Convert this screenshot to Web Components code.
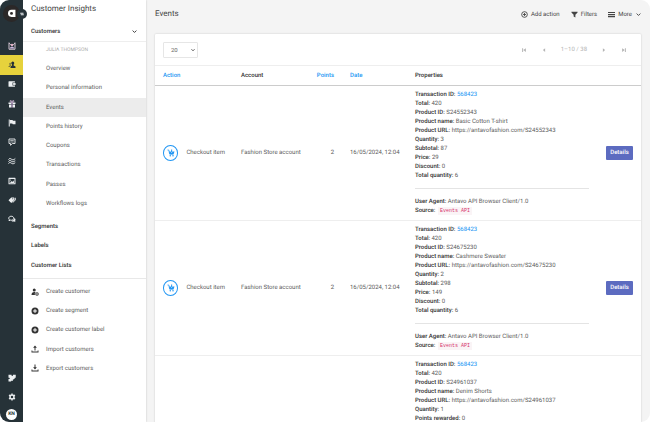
<!DOCTYPE html>
<html lang="en">
<head>
<meta charset="utf-8">
<title>Customer Insights – Events</title>
<style>
  html { background: #fff; }
  body { margin: 0; font: 6px/9px Roboto, "Liberation Sans", sans-serif; color: #5c5c5c; text-rendering: geometricPrecision; }
</style>
</head>
<body>
<app-shell>
  <nav-rail slot="rail"></nav-rail>
  <side-menu slot="menu"></side-menu>
  <page-header>
    <span slot="title">Events</span>
    <action-button icon="plusring">Add action</action-button>
    <action-button icon="filter">Filters</action-button>
    <action-button icon="menu" more>More</action-button>
  </page-header>
  <data-card>
    <list-toolbar></list-toolbar>
    <events-table></events-table>
  </data-card>
</app-shell>

<script>
const ICONS = {
  frame: '<path d="M2 1v13.500h12V1" fill="none" stroke="#e3d3e0" stroke-width="1.800"/><path d="M2 2l4 4M14 2l-4 4" stroke="#e3d3e0" stroke-width="1.500"/><circle cx="8" cy="6" r="2.600" fill="#e0b0c4"/><path d="M3.500 13c0-5 9-5 9 0z" fill="#c9b6e0"/>',
  customers: '<path d="M9.500 1a3 3 0 0 1 3 3c0 1.500-.6 2.500-1.200 3.200V9l3.700 2v3H5v-3l3-2V7.200C7.200 6.500 6.500 5.500 6.500 4a3 3 0 0 1 3-3z"/><path d="M4.500 3.500a2 2 0 0 0-2 2c0 1.200.5 1.900 1 2.300v1.400L1 10.500V12h3v-1.500L6.500 9 5.400 7.500 5.800 4z" opacity=".6"/>',
  wallet: '<path fill-rule="evenodd" d="M2 2.500h11a1 1 0 0 1 1 1V5H9v6h5v1.500a1 1 0 0 1-1 1H2a1 1 0 0 1-1-1v-9a1 1 0 0 1 1-1z"/><path d="M10 6h5v4h-5z"/><circle cx="11.800" cy="8" r=".9" fill="#263238"/>',
  gift: '<path d="M1 5h6v3H1zM9 5h6v3H9zM2 9h5v6H2zM9 9h5v6H9z"/><path d="M8 4.500C4 5 3 1 5.500 1 7 1 8 3 8 4.500zm0 0C12 5 13 1 10.500 1 9 1 8 3 8 4.500z" fill="none" stroke="#e8c8ee" stroke-width="1.500"/><path d="M7.300 5h1.400v10H7.300z" fill="#c08ad0"/>',
  flag: '<path d="M1.500 1h2v14h-2z"/><path d="M4 2h5l1 1.500h5v7H9.500L8.500 9H4z"/>',
  comment: '<path d="M2 2h12v9H9l-4 3.500V11H2z" fill="none" stroke="currentColor" stroke-width="1.800"/><path d="M4.500 5h7M4.500 8h7" stroke="currentColor" stroke-width="1.300"/>',
  waves: '<path d="M1 5c2-3 4-2 6-.5S12 6 14.500 3M1 9c2-3 4-2 6-.5s5 1.500 7.500-1.500M1 13c2-3 4-2 6-.5s5 1.500 7.500-1.500" fill="none" stroke="currentColor" stroke-width="2"/>',
  image: '<path fill-rule="evenodd" d="M2 1.500h12a1 1 0 0 1 1 1v11a1 1 0 0 1-1 1H2a1 1 0 0 1-1-1v-11a1 1 0 0 1 1-1zM3 4v8.500h10V4z"/><path d="M4 12l2.500-4 2 2L11 7l1.500 5z"/><circle cx="5" cy="6" r="1"/>',
  tags: '<path fill-rule="evenodd" d="M1 8.500L6.500 3H12v5.500L6.500 14zM9.500 4.500a1.100 1.100 0 1 0 .1 2.200 1.100 1.100 0 0 0-.1-2.200z"/><path d="M13 3.500h2.500V8L10 13.500l-1.200-1L13 8.500z"/>',
  chats: '<path d="M6.500 2.500c3 0 5 1.700 5 4s-2 4-5 4c-.7 0-1.400-.1-2-.3L2 11.500l.7-2.200C1.900 8.600 1.500 7.600 1.500 6.500c0-2.300 2-4 5-4z" fill="none" stroke="currentColor" stroke-width="2"/><path d="M12.800 6c1.500.8 2.200 1.900 2.200 3.300 0 .9-.3 1.700-.9 2.300l.7 2.400-2.500-1c-2.600.6-4.600-.1-5.600-1.600 3.500.2 6.100-2 6.100-5.400z"/>',
  puzzle: '<path d="M1 1.500h6v1a1.500 1.500 0 0 0 3 0v-1h5.500v6H14a1.300 1.300 0 0 0 0 2.500h-3v1.500H9.500V14H7.500v-1.500L6 15H1v-5h1.400a1.300 1.300 0 0 0 0-2.600H1z"/>',
  gear: '<circle cx="8" cy="8" r="4" fill="none" stroke="currentColor" stroke-width="3"/><path d="M6.600 1h2.800v2.500H6.600zM6.600 12.500h2.800V15H6.600zM1.300 5.200l1.400-2.400 2.200 1.300-1.400 2.400zM11.100 11.900l1.400-2.400 2.200 1.300-1.400 2.400zM1.300 10.800l1.400 2.400 2.200-1.300-1.400-2.400zM11.100 4.100l1.400 2.400 2.200-1.300-1.400-2.400z"/>',
  customeradd: '<circle cx="6.500" cy="4" r="3"/><path d="M1 14c0-4 2-6 5.500-6 1.200 0 2 .2 2.700.6A4.300 4.300 0 0 0 8 14z"/><circle cx="12" cy="12" r="3.500"/><path d="M12 10v4M10 12h4" stroke="#fff" stroke-width="1"/>',
  plusdisc: '<circle cx="8" cy="8" r="7"/><path d="M8 4.200v7.600M4.200 8h7.600" stroke="#fff" stroke-width="2"/>',
  plusring: '<circle cx="8" cy="8" r="6.500" fill="none" stroke="currentColor" stroke-width="2"/><path d="M8 4.500v7M4.500 8h7" stroke="currentColor" stroke-width="2"/>',
  upload: '<path d="M8 1l3.800 4.500H9V11H7V5.500H4.200zM1 11h1.800v2.200h10.400V11H15v4H1z"/>',
  download: '<path d="M8 11l3.800-4.500H9V1H7v5.500H4.200zM1 11h1.800v2.200h10.400V11H15v4H1z"/>',
  filter: '<path d="M1 1.500h14v1.800L10 8.500V15l-4-2.500v-4L1 3.300z"/>',
  menu: '<path d="M0 2h16v2.800H0zM0 6.800h16v2.800H0zM0 11.600h16v2.800H0z"/>',
  chevron: '<path d="M2 5l6 6 6-6" fill="none" stroke="currentColor" stroke-width="3"/>',
  first: '<path d="M3 3h2.600v10H3zM13 3v10L6 8z"/>',
  prev: '<path d="M11 3v10L5 8z"/>',
  next: '<path d="M5 3v10l6-5z"/>',
  last: '<path d="M10.400 3H13v10h-2.600zM3 3v10l7-5z"/>',
  swap: '<path d="M1 3h13v3.500H1zM3 9h12v3.500H3z"/>',
  cart: '<path d="M1 2h2.500l2 8.500H13" fill="none" stroke="currentColor" stroke-width="1.600"/><path d="M4 5h2.500l2.700 2.500L12 5h3l-1.700 5H5.200z"/><path d="M8.300 1h2v3h1.500L9.300 6.300 6.800 4h1.500z"/><circle cx="6.500" cy="13.500" r="1.500"/><circle cx="12" cy="13.500" r="1.500"/>',
  logo: '<path fill-rule="evenodd" d="M8 1.500h7V14H8A6.250 6.250 0 0 1 8 1.500zm0 3.700a2.600 2.600 0 1 0 .01 5.200A2.600 2.600 0 0 0 8 5.200z"/>'
};

function define(name, render) {
  customElements.define(name, class extends HTMLElement {
    connectedCallback() {
      if (this.shadowRoot) return;
      const t = document.createElement('template');
      t.innerHTML = render(this);
      this.attachShadow({ mode: 'open' }).append(t.content.cloneNode(true));
    }
  });
}

const RESET = `*{box-sizing:border-box} a{color:inherit;text-decoration:none} button{font:inherit;color:inherit;background:none;border:0;padding:0;margin:0;cursor:pointer;text-rendering:inherit}`;

define('ui-icon', el => `<style>
  :host{display:block;flex:none;width:var(--icon-size,8px);height:var(--icon-size,8px)}
  svg{display:block;width:100%;height:100%}
</style><svg viewBox="0 0 16 16" fill="currentColor" aria-hidden="true">${ICONS[el.getAttribute('name')]}</svg>`);

define('app-shell', () => `<style>${RESET}
  :host{display:grid;grid-template-columns:23px 123px minmax(0,1fr);height:100vh;overflow:hidden;border-radius:9px;background:#f4f4f4}
  main{padding:0 9px;overflow:hidden}
</style><slot name="rail"></slot><slot name="menu"></slot><main><slot></slot></main>`);

const railItems = [['frame','Dashboard'],['customers','Customers'],['wallet','Wallet'],['gift','Rewards'],['flag','Challenges'],['comment','Messages'],['waves','Workflows'],['image','Media'],['tags','Offers'],['chats','Feedback']];
define('nav-rail', () => `<style>${RESET}
  :host{display:flex;flex-direction:column;background:#263238;color:#eceff1;position:relative;z-index:1}
  .brand{height:36px;padding:5px 3px;--icon-size:9px}
  .logo{display:grid;place-items:center;width:17px;height:17px;border-radius:50%;background:#2b2828;color:#fff}
  .toggle{position:absolute;left:17px;top:9px;width:10px;height:10px;border-radius:50%;background:#263238;display:grid;place-items:center;--icon-size:4px}
  nav{display:grid;grid-auto-rows:1fr;height:193px}
  nav a,.foot>*{display:grid;place-items:center}
  nav a.on{background:#e6d23c;color:#263238}
  .foot{margin-top:auto;display:grid;grid-template-rows:19px 19px 16px}
  .avatar{width:11px;height:11px;border-radius:50%;background:#fff;color:#263238;font-size:5px;font-weight:700;line-height:11px;justify-self:center;align-self:center}
</style>
<div class="brand"><a class="logo" href="#" aria-label="Home"><ui-icon name="logo"></ui-icon></a>
<button class="toggle" aria-label="Toggle menu"><ui-icon name="swap"></ui-icon></button></div>
<nav>${railItems.map(([i,l]) => `<a href="#" aria-label="${l}"${i==='customers'?' class="on"':''}><ui-icon name="${i}"></ui-icon></a>`).join('')}</nav>
<div class="foot"><a href="#" aria-label="Modules"><ui-icon name="puzzle"></ui-icon></a><a href="#" aria-label="Settings"><ui-icon name="gear"></ui-icon></a><button class="avatar">KN</button></div>`);

const pages = ['Overview','Personal information','Events','Points history','Coupons','Transactions','Passes','Workflows logs'];
const actions = [['customeradd','Create customer'],['plusdisc','Create segment'],['plusdisc','Create customer label'],['upload','Import customers'],['download','Export customers']];
define('side-menu', () => `<style>${RESET}
  :host{display:block;background:#fff;box-shadow:0 0 2px #0003}
  h1{margin:0;padding:3px 8px;height:22px;font-size:8px;line-height:12px;font-weight:400;color:#444}
  .head{display:flex;align-items:center;justify-content:space-between;width:100%;height:20px;padding:0 9px 0 8px;border-bottom:1px solid #eee;font-weight:500;color:#333;--icon-size:5px}
  .name{padding:4px 23px;height:17px;font-size:5px;color:#aaa}
  nav{display:grid;grid-auto-rows:1fr}
  nav a{display:flex;align-items:center;padding:0 8px}
  .pages{height:154px}.pages a{padding:0 23px}
  .pages .on{background:#ececec}
  .groups{height:58px;margin-top:4px;font-weight:500;color:#333}
  .actions{border-top:1px solid #e8e8e8;margin-top:3px;padding-top:3px;height:100px}
  .actions ui-icon{margin-right:7px;color:#333}
</style>
<h1>Customer Insights</h1>
<button class="head">Customers<ui-icon name="chevron"></ui-icon></button>
<div class="name">JULIA THOMPSON</div>
<nav class="pages">${pages.map(p => `<a href="#"${p==='Events'?' class="on" aria-current="page"':''}>${p}</a>`).join('')}</nav>
<nav class="groups"><a href="#">Segments</a><a href="#">Labels</a><a href="#">Customer Lists</a></nav>
<nav class="actions">${actions.map(([i,l]) => `<a href="#"><ui-icon name="${i}"></ui-icon>${l}</a>`).join('')}</nav>`);

define('page-header', () => `<style>
  :host{display:flex;align-items:center;height:28px;margin-bottom:6px;gap:11px;color:#444}
  h2{margin:0 auto 0 0;font-size:8px;line-height:12px;font-weight:400}
</style><h2><slot name="title"></slot></h2><slot></slot>`);

define('action-button', el => `<style>${RESET}
  :host{display:block}
  button{display:flex;align-items:center;gap:3px;--icon-size:7px}
  .caret{--icon-size:5px;margin-left:1px}
</style><button><ui-icon name="${el.getAttribute('icon')}"></ui-icon><slot></slot>${el.hasAttribute('more')?'<ui-icon class="caret" name="chevron"></ui-icon>':''}</button>`);

define('data-card', () => `<style>:host{display:block;background:#fff;border-radius:1px;box-shadow:0 0 2px #0003}</style><slot></slot>`);

define('list-toolbar', () => `<style>${RESET}
  :host{box-sizing:border-box;display:flex;align-items:center;justify-content:space-between;height:32px;padding:0 8px;border-bottom:1px solid #eee}
  .size{display:grid;align-items:center;--icon-size:4px}
  .size>*{grid-area:1/1}
  select{appearance:none;width:35px;height:16px;padding:0 7px;font:inherit;color:#666;background:#fff;border:1px solid #e6e6e6;border-radius:1px}
  .size ui-icon{justify-self:end;margin-right:3px;color:#222;pointer-events:none}
  .pager{display:flex;align-items:center;gap:14px;color:#b5b5b5;--icon-size:6px;padding-right:6px}
</style>
<div class="size"><select aria-label="Rows per page"><option>20</option><option>50</option></select><ui-icon name="chevron"></ui-icon></div>
<div class="pager"><button aria-label="First page"><ui-icon name="first"></ui-icon></button><button aria-label="Previous page"><ui-icon name="prev"></ui-icon></button><span>1–10 / 38</span><button aria-label="Next page"><ui-icon name="next"></ui-icon></button><button aria-label="Last page"><ui-icon name="last"></ui-icon></button></div>`);

const detail = (id, name, rest) => [['Total','420'],['Product ID',id],['Product name',name],['Product URL','https://antavofashion.com/'+id],...rest];
const events = [
  { props: detail('S24552343','Basic Cotton T-shirt',[['Quantity','3'],['Subtotal','87'],['Price','29'],['Discount','0'],['Total quantity','6']]) },
  { props: detail('S24675230','Cashmere Sweater',[['Quantity','2'],['Subtotal','298'],['Price','149'],['Discount','0'],['Total quantity','6']]) },
  { props: detail('S24961037','Denim Shorts',[['Quantity','1'],['Points rewarded','0']]), partial: true }
];

define('event-properties', el => { const e = events[el.getAttribute('index')]; return `<style>${RESET}
  :host{display:block}
  div{height:9px}
  b{font-weight:500;color:#333}
  a{color:#2196f3}
  hr{height:1px;border:0;background:#e4e4e4;margin:8px 0}
  code{font:5px/7px "Liberation Mono",monospace;text-rendering:auto;color:#d6336c;background:#faf4f6;padding:1px 2px;margin-left:1px}
</style><div><b>Transaction ID:</b> <a href="#">568423</a></div>${e.props.map(([k,v]) => `<div><b>${k}:</b> ${v}</div>`).join('')}${e.partial?'':'<hr><div><b>User Agent:</b> Antavo API Browser Client/1.0</div><div><b>Source:</b> <code>Events API</code></div>'}`; });

define('events-table', () => `<style>${RESET}
  :host{display:block}
  table{width:100%;table-layout:fixed;border-collapse:separate;border-spacing:0}
  .action{width:78px}.account{width:74px}.points{width:35px}.date{width:65px}.details{width:44px}
  th{height:20px;padding:0 8px;text-align:left;font-weight:500;color:#333;border-bottom:1px solid #ccc}
  th a{color:#2196f3}
  td{padding:4px 8px 5px;border-bottom:1px solid #eee;white-space:nowrap}
  .num{text-align:right}
  .type{display:flex;align-items:center;gap:8px;--icon-size:8px}
  .badge{display:grid;place-items:center;width:16px;height:16px;border:1px solid #2196f3;border-radius:50%;color:#2196f3}
  .btn{display:block;width:27px;height:14px;margin-left:auto;border-radius:1px;background:#5c6bc0;color:#fff;font-weight:500}
  tr:last-child td{border-bottom:0}
</style>
<table>
<colgroup><col class="action"><col class="account"><col class="points"><col class="date"><col><col class="details"></colgroup>
<thead><tr><th><a href="#">Action</a></th><th>Account</th><th class="num"><a href="#">Points</a></th><th><a href="#">Date</a></th><th>Properties</th><th></th></tr></thead>
<tbody>${events.map((e,i) => { const props = `<td><event-properties index="${i}"></event-properties></td>`; return e.partial
  ? `<tr><td></td><td></td><td></td><td></td>${props}<td></td></tr>`
  : `<tr><td><div class="type"><span class="badge"><ui-icon name="cart"></ui-icon></span>Checkout item</div></td><td>Fashion Store account</td><td class="num">2</td><td>16/05/2024, 12:04</td>${props}<td><button class="btn">Details</button></td></tr>`; }).join('')}</tbody>
</table>`);
</script>
</body>
</html>
